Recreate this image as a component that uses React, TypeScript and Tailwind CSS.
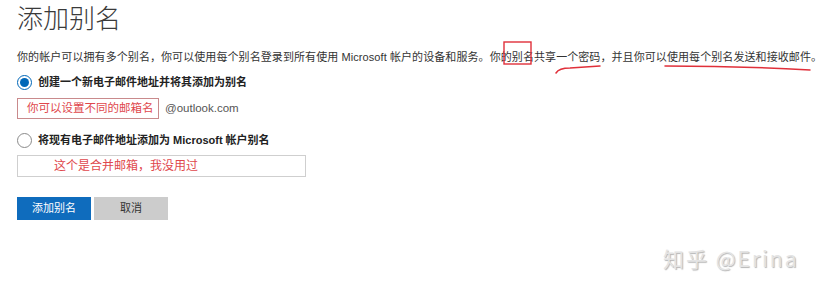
import React from 'react';

const font = "font-['Liberation_Sans','Noto_Sans_CJK_SC',sans-serif]";

const Radio = ({ checked }: { checked?: boolean }) => (
  <span
    className={`w-[15px] h-[15px] rounded-full border flex items-center justify-center shrink-0 ${
      checked ? 'border-[#0067b8]' : 'border-[#8a8a8a]'
    }`}
  >
    {checked && <span className="w-[9px] h-[9px] rounded-full bg-[#0067b8]" />}
  </span>
);

const App = () => {
  return (
    <div className={`relative w-[824px] h-[292px] bg-white overflow-hidden pl-[17px] ${font}`}>
      {/* Title */}
      <h1 className="h-[38px] text-[26px] leading-[38px] font-light text-[#3a3a3a]">添加别名</h1>

      {/* Description */}
      <p className="mt-[11px] text-[11px] leading-[16px] text-[#333] whitespace-nowrap tracking-[0.08px]">
        你的帐户可以拥有多个别名，你可以使用每个别名登录到所有使用 Microsoft 帐户的设备和服务。你的别名共享一个密码，并且你可以使用每个别名发送和接收邮件。
      </p>

      {/* Option 1 */}
      <label className="mt-[9px] h-[16px] flex items-center gap-[6px]">
        <Radio checked />
        <span className="text-[11px] font-bold text-[#222]">创建一个新电子邮件地址并将其添加为别名</span>
      </label>

      <div className="mt-[8px] flex items-center gap-[6px]">
        <div className="w-[142px] h-[21px] border border-[#c98a8c] flex items-center pl-[9px] text-[11.5px] text-[#e0474c]">
          你可以设置不同的邮箱名
        </div>
        <span className="text-[11.5px] text-[#555]">@outlook.com</span>
      </div>

      {/* Option 2 */}
      <label className="mt-[13px] h-[16px] flex items-center gap-[6px]">
        <Radio />
        <span className="text-[11px] font-bold text-[#222]">将现有电子邮件地址添加为 Microsoft 帐户别名</span>
      </label>

      <div className="mt-[7px] w-[289px] h-[22px] border border-[#cfcfcf] flex items-center pl-[36px] text-[12px] text-[#e0474c]">
        这个是合并邮箱，我没用过
      </div>

      {/* Buttons */}
      <div className="mt-[20px] flex gap-[3px]">
        <button className="w-[74px] h-[23px] bg-[#0f6cbd] text-white text-[11px]">添加别名</button>
        <button className="w-[74px] h-[23px] bg-[#cccccc] text-[#333] text-[11px]">取消</button>
      </div>

      {/* Hand-drawn annotations */}
      <svg className="absolute inset-0 pointer-events-none" width="824" height="292" viewBox="0 0 824 292">
        <rect x="504" y="42" width="27" height="22" fill="none" stroke="#e0303a" strokeWidth="1.4" />
        <path d="M556 73 Q559 68 570 68 L600 66" fill="none" stroke="#e0303a" strokeWidth="1.5" strokeLinecap="round" />
        <path d="M665 66 Q737 66 810 70" fill="none" stroke="#e0303a" strokeWidth="1.5" strokeLinecap="round" />
      </svg>

      {/* Watermark */}
      <div className="absolute left-[663px] top-[244px] text-[21px] leading-[28px] text-[#e4e4e4] font-['Noto_Sans_CJK_SC','Noto_Sans',sans-serif] [text-shadow:1px_1px_1px_#b5b5b5] tracking-[2px]">
        知乎 @Erina
      </div>
    </div>
  );
};

export default App;
